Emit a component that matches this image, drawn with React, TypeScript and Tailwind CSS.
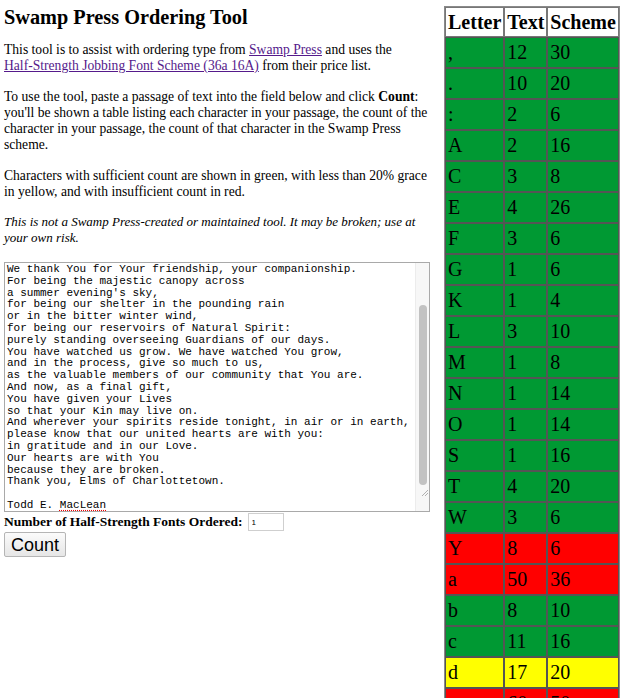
import React from "react";

type Row = {
  letter: string;
  text: number;
  scheme: number;
};

const rows: Row[] = [
  { letter: ",", text: 12, scheme: 30 },
  { letter: ".", text: 10, scheme: 20 },
  { letter: ":", text: 2, scheme: 6 },
  { letter: "A", text: 2, scheme: 16 },
  { letter: "C", text: 3, scheme: 8 },
  { letter: "E", text: 4, scheme: 26 },
  { letter: "F", text: 3, scheme: 6 },
  { letter: "G", text: 1, scheme: 6 },
  { letter: "K", text: 1, scheme: 4 },
  { letter: "L", text: 3, scheme: 10 },
  { letter: "M", text: 1, scheme: 8 },
  { letter: "N", text: 1, scheme: 14 },
  { letter: "O", text: 1, scheme: 14 },
  { letter: "S", text: 1, scheme: 16 },
  { letter: "T", text: 4, scheme: 20 },
  { letter: "W", text: 3, scheme: 6 },
  { letter: "Y", text: 8, scheme: 6 },
  { letter: "a", text: 50, scheme: 36 },
  { letter: "b", text: 8, scheme: 10 },
  { letter: "c", text: 11, scheme: 16 },
  { letter: "d", text: 17, scheme: 20 },
  { letter: "e", text: 60, scheme: 50 },
];

const passage = [
  "We thank You for Your friendship, your companionship.",
  "For being the majestic canopy across",
  "a summer evening's sky,",
  "for being our shelter in the pounding rain",
  "or in the bitter winter wind,",
  "for being our reservoirs of Natural Spirit:",
  "purely standing overseeing Guardians of our days.",
  "You have watched us grow. We have watched You grow,",
  "and in the process, give so much to us,",
  "as the valuable members of our community that You are.",
  "And now, as a final gift,",
  "You have given your Lives",
  "so that your Kin may live on.",
  "And wherever your spirits reside tonight, in air or in earth,",
  "please know that our united hearts are with you:",
  "in gratitude and in our Love.",
  "Our hearts are with You",
  "because they are broken.",
  "Thank you, Elms of Charlottetown.",
  "",
];

// verde si alcanza, amarillo si entra en el 20% de gracia, rojo si no
const rowColor = (r: Row) => {
  if (r.text <= r.scheme * 0.8) return "bg-[#009933]";
  if (r.text <= r.scheme) return "bg-[#ffff00]";
  return "bg-[#ff0000]";
};

export default function App() {
  return (
    <div className="h-[698px] overflow-hidden bg-white text-black font-['Liberation_Serif',serif]">
      <div className="flex items-start">
        {/* Columna izquierda */}
        <div className="w-[426px] ml-[4px] shrink-0">
          <h1 className="text-[20.3px] font-bold leading-[24px] mt-[5px]">
            Swamp Press Ordering Tool
          </h1>

          <div className="text-[13.6px] leading-[16px] w-[430px]">
            <p className="mt-[13px]">
              This tool is to assist with ordering type from{" "}
              <a href="#" className="text-[#551a8b] underline">
                Swamp Press
              </a>{" "}
              and uses the{" "}
              <a href="#" className="text-[#551a8b] underline whitespace-nowrap">
                Half-Strength Jobbing Font Scheme (36a 16A)
              </a>{" "}
              from their price list.
            </p>
            <p className="mt-[15px]">
              To use the tool, paste a passage of text into the field below and click{" "}
              <b>Count</b>: you'll be shown a table listing each character in your passage,
              the count of the character in your passage, the count of that character in
              the Swamp Press scheme.
            </p>
            <p className="mt-[15px]">
              Characters with sufficient count are shown in green, with less than 20% grace
              in yellow, and with insufficient count in red.
            </p>
            <p className="mt-[14px] italic text-[13px]">
              This is not a Swamp Press-created or maintained tool. It may be broken; use at
              your own risk.
            </p>
          </div>

          {/* Campo de texto */}
          <div className="mt-[16px] h-[250px] border border-[#a9a9a9] flex">
            <div className="flex-1 pl-[2px] pt-[1px] overflow-hidden font-['Liberation_Mono',monospace] text-[11px] leading-[11.8px] whitespace-pre">
              {passage.map((line, i) => (
                <div key={i} className="h-[11.8px]">
                  {line}
                </div>
              ))}
              <div className="h-[11.8px]">
                Todd E.{" "}
                <span className="underline decoration-dotted decoration-[#e00] underline-offset-2">
                  MacLean
                </span>
              </div>
            </div>
            <div className="w-[14px] bg-[#f7f7f7] border-l border-[#ececec] flex flex-col pt-[42px] pb-[14px] items-center">
              <div className="w-[8px] flex-1 rounded-full bg-[#c2c2c2]" />
              <svg width="10" height="10" viewBox="0 0 10 10" className="mt-[2px] ml-[2px]">
                <path d="M9 3 L3 9 M9 6 L6 9" stroke="#b0b0b0" strokeWidth="1" />
              </svg>
            </div>
          </div>

          <div className="flex items-center mt-[1px]">
            <label className="text-[13.5px] font-bold leading-[16px]">
              Number of Half-Strength Fonts Ordered:
            </label>
            <input
              defaultValue="1"
              className="ml-[5px] w-[36px] h-[18px] border border-[#cfcfcf] text-[8px] px-[3px] outline-none font-['Liberation_Sans',sans-serif]"
            />
          </div>

          <button className="mt-[1px] w-[62px] h-[25px] border border-[#b5b5b5] rounded-[2px] bg-gradient-to-b from-[#fbfbfb] to-[#e6e6e6] text-[18px] leading-[20px] font-['Liberation_Sans',sans-serif]">
            Count
          </button>
        </div>

        {/* Tabla de letras */}
        <table className="ml-[14px] mt-[6px] border border-[#8a8a8a] border-separate border-spacing-0 text-[20px] leading-[23px]">
          <thead>
            <tr className="h-[30px] bg-white">
              <th className="border border-[#777] px-[2px] text-left font-bold">Letter</th>
              <th className="border border-[#777] px-[2px] text-left font-bold">Text</th>
              <th className="border border-[#777] px-[2px] text-left font-bold">Scheme</th>
            </tr>
          </thead>
          <tbody>
            {rows.map((r) => (
              <tr key={r.letter} className={`h-[31px] ${rowColor(r)}`}>
                <td className="border border-[#555] px-[2px]">{r.letter}</td>
                <td className="border border-[#555] px-[2px]">{r.text}</td>
                <td className="border border-[#555] px-[2px]">{r.scheme}</td>
              </tr>
            ))}
          </tbody>
        </table>
      </div>
    </div>
  );
}
